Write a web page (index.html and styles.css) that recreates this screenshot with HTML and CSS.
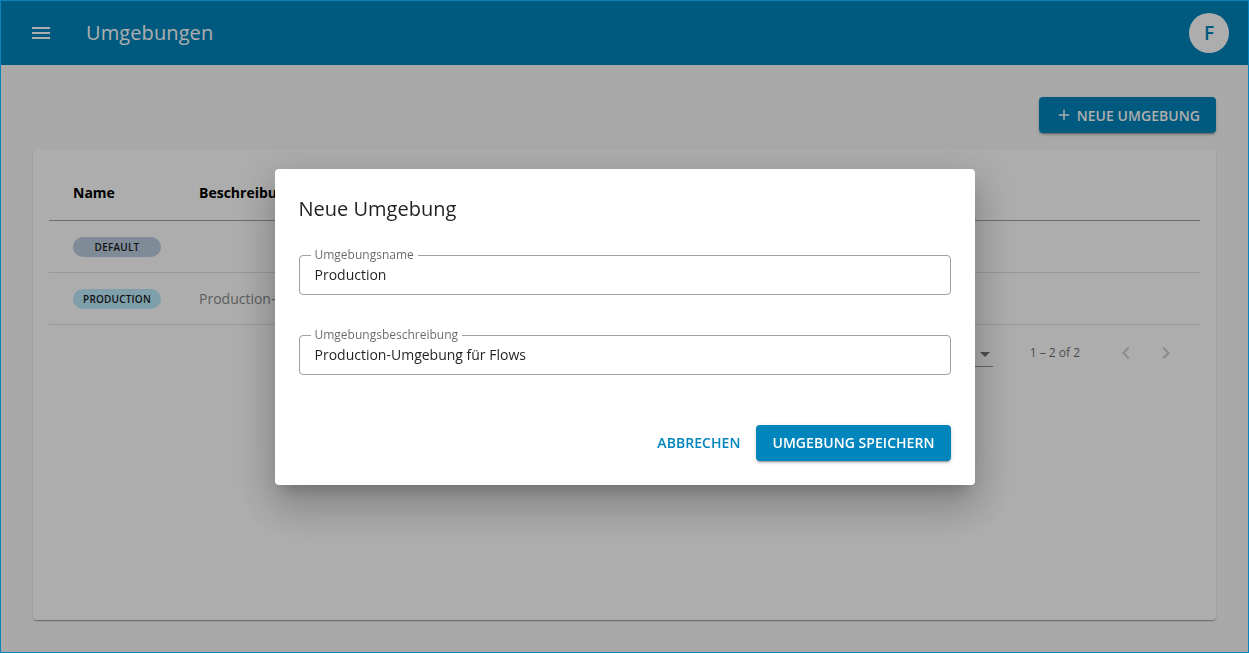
FILE: index.html
```html
<!DOCTYPE html>
<html lang="de">
<head>
<meta charset="utf-8">
<title>Umgebungen</title>
<link rel="stylesheet" href="styles.css">
</head>
<body>
<div class="app">
  <header class="toolbar">
    <button class="icon-btn menu-btn" aria-label="Menü">
      <svg viewBox="0 0 24 24" width="24" height="24"><path fill="currentColor" d="M3 18h18v-2H3v2zm0-5h18v-2H3v2zm0-7v2h18V6H3z"/></svg>
    </button>
    <h1 class="toolbar-title">Umgebungen</h1>
    <div class="spacer"></div>
    <div class="avatar">F</div>
  </header>

  <main class="content">
    <div class="actions-top">
      <button class="btn btn-primary btn-new">
        <svg viewBox="0 0 24 24" width="18" height="18"><path fill="currentColor" d="M19 13h-6v6h-2v-6H5v-2h6V5h2v6h6v2z"/></svg>
        <span>NEUE UMGEBUNG</span>
      </button>
    </div>

    <section class="card">
      <table class="env-table">
        <colgroup><col class="col-name"><col></colgroup>
        <thead>
          <tr><th>Name</th><th>Beschreibung</th></tr>
        </thead>
        <tbody>
          <tr>
            <td><span class="chip chip-default">DEFAULT</span></td>
            <td></td>
          </tr>
          <tr>
            <td><span class="chip chip-prod">PRODUCTION</span></td>
            <td class="desc">Production-Umgebung für Flows</td>
          </tr>
        </tbody>
      </table>
      <div class="paginator">
        <span class="page-size-label">Items per page:</span>
        <div class="page-select"><span>10</span><span class="arrow"></span></div>
        <span class="range">1 – 2 of 2</span>
        <button class="icon-btn nav-btn" aria-label="Zurück">
          <svg viewBox="0 0 24 24" width="24" height="24"><path fill="currentColor" d="M15.41 7.41L14 6l-6 6 6 6 1.41-1.41L10.83 12z"/></svg>
        </button>
        <button class="icon-btn nav-btn" aria-label="Weiter">
          <svg viewBox="0 0 24 24" width="24" height="24"><path fill="currentColor" d="M10 6L8.59 7.41 13.17 12l-4.58 4.59L10 18l6-6z"/></svg>
        </button>
      </div>
    </section>
  </main>
</div>

<div class="backdrop">
  <div class="dialog" role="dialog">
    <h2 class="dialog-title">Neue Umgebung</h2>
    <div class="field">
      <span class="field-label">Umgebungsname</span>
      <div class="field-value">Production</div>
    </div>
    <div class="field field-second">
      <span class="field-label">Umgebungsbeschreibung</span>
      <div class="field-value">Production-Umgebung für Flows</div>
    </div>
    <div class="dialog-actions">
      <button class="btn btn-text">ABBRECHEN</button>
      <button class="btn btn-primary btn-save">UMGEBUNG SPEICHERN</button>
    </div>
  </div>
</div>

<div class="frame"></div>
</body>
</html>
```

FILE: styles.css
```css
* { box-sizing: border-box; }

html, body {
  margin: 0;
  height: 100%;
}

body {
  padding: 1px;
  font-family: "Open Sans", "Noto Sans", "Liberation Sans", sans-serif;
  background: #fafafa;
  color: rgba(0, 0, 0, 0.87);
}

button {
  font-family: inherit;
  border: 0;
  background: none;
  cursor: pointer;
  padding: 0;
}

.app {
  height: 100%;
  display: flex;
  flex-direction: column;
}

.toolbar {
  height: 64px;
  flex: 0 0 64px;
  background: #0085bc;
  color: #fff;
  display: flex;
  align-items: center;
  padding: 0 19px 0 20px;
}

.icon-btn {
  width: 40px;
  height: 40px;
  border-radius: 50%;
  display: flex;
  align-items: center;
  justify-content: center;
  color: inherit;
}

.toolbar-title {
  margin: 0 0 0 25px;
  font-size: 20px;
  font-weight: 500;
  letter-spacing: 0.1px;
  line-height: 32px;
}

.spacer { flex: 1; }

.avatar {
  width: 40px;
  height: 40px;
  border-radius: 50%;
  background: #fff;
  color: #0085bc;
  font-size: 19px;
  font-weight: 600;
  display: flex;
  align-items: center;
  justify-content: center;
}

.content {
  flex: 1;
  display: flex;
  flex-direction: column;
  padding: 32px;
}

.actions-top {
  display: flex;
  justify-content: flex-end;
  margin-bottom: 16px;
}

.btn {
  height: 36px;
  padding: 0 16px;
  border-radius: 4px;
  font-size: 14px;
  font-weight: 600;
  letter-spacing: 0.05px;
  display: inline-flex;
  align-items: center;
}

.btn-primary {
  background: #0085bc;
  color: #fff;
  box-shadow: 0 3px 1px -2px rgba(0,0,0,.2), 0 2px 2px 0 rgba(0,0,0,.14), 0 1px 5px 0 rgba(0,0,0,.12);
}

.btn-new { gap: 4px; }

.btn-text {
  color: #0085bc;
  background: transparent;
}

.card {
  flex: 1;
  background: #fff;
  border-radius: 4px;
  padding: 16px;
  box-shadow: 0 2px 1px -1px rgba(0,0,0,.2), 0 1px 1px 0 rgba(0,0,0,.14), 0 1px 3px 0 rgba(0,0,0,.12);
}

.env-table {
  width: 100%;
  table-layout: fixed;
  border-collapse: collapse;
  font-size: 14px;
}

.env-table .col-name { width: 126px; }

.env-table th {
  height: 55px;
  text-align: left;
  font-weight: 700;
  color: #000;
  padding: 0 24px;
  border-bottom: 1px solid #a2a2a2;
}

.env-table td {
  height: 52px;
  padding: 0 24px;
  border-bottom: 1px solid #e0e0e0;
  vertical-align: middle;
}

.chip {
  display: inline-flex;
  align-items: center;
  justify-content: center;
  width: 88px;
  height: 20px;
  border-radius: 10px;
  font-size: 10px;
  font-weight: 600;
  color: #1a1a1a;
  letter-spacing: 0.2px;
}

.chip-default { background: #bbcee0; }
.chip-prod { background: #bbebfd; }

.desc { color: #8a8a8a; }

.paginator {
  height: 56px;
  display: flex;
  align-items: center;
  justify-content: flex-end;
  font-size: 12px;
  color: rgba(0, 0, 0, 0.54);
  padding-right: 14px;
}

.page-size-label { margin-right: 8px; }

.page-select {
  width: 56px;
  height: 28px;
  border-bottom: 1px solid rgba(0,0,0,.42);
  display: flex;
  align-items: center;
  justify-content: space-between;
  padding: 4px 3px 0 0;
  color: rgba(0,0,0,.87);
}

.page-select .arrow {
  width: 0;
  height: 0;
  border-left: 5px solid transparent;
  border-right: 5px solid transparent;
  border-top: 5px solid rgba(0,0,0,.54);
}

.range {
  margin: 0 26px 0 37px;
  color: rgba(0, 0, 0, 0.6);
}

.nav-btn { color: rgba(0, 0, 0, 0.2); }

.backdrop {
  position: fixed;
  inset: 0;
  background: rgba(0, 0, 0, 0.32);
  display: flex;
  align-items: center;
  justify-content: center;
  z-index: 10;
}

.dialog {
  width: 700px;
  background: #fff;
  border-radius: 4px;
  padding: 24px;
  box-shadow: 0 11px 15px -7px rgba(0,0,0,.2), 0 24px 38px 3px rgba(0,0,0,.14), 0 9px 46px 8px rgba(0,0,0,.12);
}

.dialog-title {
  margin: 0 0 30px;
  font-size: 20px;
  font-weight: 400;
  line-height: 32px;
  color: rgba(0, 0, 0, 0.87);
}

.field {
  position: relative;
  height: 40px;
  border: 1px solid #a0a0a0;
  border-radius: 4px;
  display: flex;
  align-items: center;
  padding: 0 15px;
}

.field-second { margin-top: 40px; }

.field-label {
  position: absolute;
  top: -8px;
  left: 11px;
  padding: 0 4px;
  background: #fff;
  font-size: 12px;
  line-height: 14px;
  color: rgba(0, 0, 0, 0.6);
}

.field-value {
  font-size: 14px;
  color: rgba(0, 0, 0, 0.87);
}

.dialog-actions {
  display: flex;
  justify-content: flex-end;
  margin-top: 50px;
}

.frame {
  position: fixed;
  inset: 0;
  border: 1px solid #0a82c0;
  pointer-events: none;
  z-index: 100;
}
```
